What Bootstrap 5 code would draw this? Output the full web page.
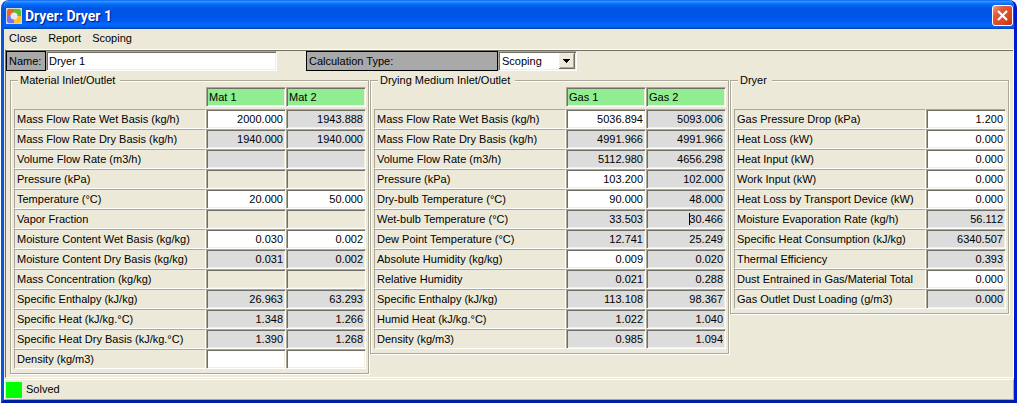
<!DOCTYPE html>
<html lang="en">
<head>
<meta charset="utf-8">
<meta name="viewport" content="width=device-width, initial-scale=1">
<title>Dryer: Dryer 1</title>
<link href="https://cdn.jsdelivr.net/npm/bootstrap@5.3.0/dist/css/bootstrap.min.css" rel="stylesheet">
<style>
  :root { --face:#ece9d8; --shade:#aca899; --dark:#716f64; --lite:#f1efe2; --calc:#dcdcdc; }
  body { font:11px/13px "Liberation Sans", Arial, sans-serif; color:#000; background:#fff; padding:0 0 1px 1px; }
  .win { min-height:calc(100vh - 1px); background:var(--face); border:solid #0831d9; border-width:0 3px 3px; border-color:#0831d9 #0019cf #001ea0 #0855dd; border-radius:8px 8px 0 0; overflow:hidden; }
  .titlebar { height:29px; margin:0 -3px; padding:2px 4px 0 5px; color:#fff;
    background:linear-gradient(#0058ee 0,#3593ff 4%,#288eff 7%,#127dff 10%,#036ffc 14%,#0262ee 20%,#0057e5 28%,#0054e3 45%,#0055eb 60%,#005bf5 74%,#026afe 84%,#0062ef 92%,#0040ab 100%); }
  .titlebar h1 { font:bold 14px/20px Roboto, sans-serif; text-shadow:1px 1px 1px #0f1089; margin:0 0 0 3px; }
  .closebtn { width:21px; height:21px; padding:0; border:1px solid #fff; border-radius:3px; line-height:0;
    background:linear-gradient(135deg,#f0a088 0,#e4593a 30%,#d9431d 75%,#b8300c 100%); }
  .menubar { height:20px; padding:3px 5px 0; gap:11px; }
  .menubar a { color:#000; text-decoration:none; }
  .client { margin-left:1px; border:1px solid #fff; border-left-color:var(--dark); border-right-color:#fff; }
  .client-in { border-top:1px solid var(--dark); padding-bottom:3px; }
  .tag { height:20px; border:1px solid #000; background:#a9a9a9; padding:3px 2px 0; }
  .sunk { display:block; height:20px; border:1px solid; border-color:var(--shade) #fff #fff var(--shade); border-radius:0;
    box-shadow:inset 1px 1px 0 var(--dark), inset -1px -1px 0 var(--lite); background:#fff; color:#000; font:inherit; outline:0; }
  .name-tag { width:40px; } .name-box { width:231px; padding:0 2px; }
  .calc-tag { width:192px; margin-left:29px; }
  .combo { width:79px; }
  .combo select { width:100%; height:100%; appearance:none; border:0; background:transparent; font:inherit; color:#000; padding:0 18px 0 3px; outline:0; }
  .combo svg { position:absolute; right:1px; top:1px; pointer-events:none; }
  .groups { display:grid; grid-template-columns:minmax(300px,360fr) minmax(300px,360fr) minmax(230px,280fr); padding:3px 3px 0 4px; align-items:start; }
  .group { margin-right:1px; min-width:0; border:1px solid var(--shade); box-shadow:1px 1px 0 #fff, inset 1px 1px 0 #fff; padding:0 2px 4px 3px; }
  .group legend { float:none; width:auto; height:13px; font:inherit; margin:0 0 0 4px; padding:0 5px 0 2px; background:var(--face); }
  .grid { width:100%; table-layout:fixed; border-collapse:separate; border-spacing:0; }
  .grid th, .grid td { padding:0; font-weight:normal; height:20px; vertical-align:top; }
  .grid thead th { height:22px; }
  .grid .val { width:80px; }
  .grid tbody th { border:1px solid; border-color:var(--shade) #fff #fff var(--shade); padding:3px 2px 0; white-space:nowrap; overflow:hidden; line-height:13px; }
  .grid .sunk { width:100%; padding:0 2px; text-align:right; }
  .grid .head { background:#90ee90; text-align:left; padding:3px 2px 0; }
  .sunk.calc { background:var(--calc); }
  .sunk.off { background:var(--face); }
  .ibeam { position:absolute; right:36px; top:4px; width:1px; height:12px; background:#000; }
  .statusbar { height:21px; margin-top:1px; border:1px solid #fff; border-color:#fff var(--shade) var(--shade) #fff; padding-left:1px; }
  .lamp { width:16px; height:16px; background:#0f0; }
</style>
</head>
<body>
<div class="win d-flex flex-column">
  <header class="titlebar d-flex align-items-center">
    <svg width="16" height="16" viewBox="0 0 16 16" aria-hidden="true">
      <rect width="16" height="16" fill="#d4d8cc"/>
      <path d="M1 9V2h1V1h7v8z" fill="#f0602c"/><path d="M8 8V1h6v1h1v7z" fill="#58c030"/>
      <path d="M8 8h7v6h-1v1H7z" fill="#ffc428"/><path d="M8 8v7H2v-1H1V7z" fill="#8070f0"/>
      <circle cx="8" cy="8" r="3.5" fill="#e8e8f4"/>
    </svg>
    <h1>Dryer: Dryer 1</h1>
    <button type="button" class="closebtn ms-auto" aria-label="Close window">
      <svg width="19" height="19" viewBox="0 0 19 19"><path d="M5 5l9 9M14 5l-9 9" stroke="#fff" stroke-width="2.2"/></svg>
    </button>
  </header>
  <nav class="menubar d-flex"><a href="#">Close</a><a href="#">Report</a><a href="#">Scoping</a></nav>

  <main class="client flex-grow-1 d-flex flex-column"><div class="client-in flex-grow-1">
    <div class="d-flex">
      <label class="tag name-tag" for="nm">Name:</label>
      <input id="nm" class="sunk name-box" value="Dryer 1">
      <label class="tag calc-tag" for="ct">Calculation Type:</label>
      <div class="sunk combo position-relative">
        <select id="ct"><option>Scoping</option><option>Balance</option></select>
        <svg width="16" height="16" viewBox="0 0 16 16" aria-hidden="true"><path d="M0 0h16v16H0z" fill="#716f64"/><path d="M0 0h15v15H0z" fill="#f1efe2"/><path d="M1 1h14v14H1z" fill="#aca899"/><path d="M1 1h13v13H1z" fill="#ece9d8"/><path d="M4 6h7v1h-1v1H9v1H8v1H7V9H6V8H5V7H4z"/></svg>
      </div>
    </div>
    <div class="groups" id="groups"></div>
  </div></main>

  <footer class="statusbar d-flex align-items-center"><span class="lamp"></span><span class="ms-1">Solved</span></footer>
</div>

<script src="https://cdn.jsdelivr.net/npm/bootstrap@5.3.0/dist/js/bootstrap.bundle.min.js"></script>
<script>
// Values: plain = editable, "=" prefix = calculated, "-" = unavailable.
const data = [
  { title:'Material Inlet/Outlet', heads:['Mat 1','Mat 2'], rows:[
    ['Mass Flow Rate Wet Basis (kg/h)','2000.000','=1943.888'],
    ['Mass Flow Rate Dry Basis (kg/h)','=1940.000','=1940.000'],
    ['Volume Flow Rate (m3/h)','=','='],
    ['Pressure (kPa)','-','-'],
    ['Temperature (°C)','20.000','50.000'],
    ['Vapor Fraction','-','-'],
    ['Moisture Content Wet Basis (kg/kg)','0.030','0.002'],
    ['Moisture Content Dry Basis (kg/kg)','=0.031','=0.002'],
    ['Mass Concentration (kg/kg)','-','-'],
    ['Specific Enthalpy (kJ/kg)','=26.963','=63.293'],
    ['Specific Heat (kJ/kg.°C)','=1.348','=1.266'],
    ['Specific Heat Dry Basis (kJ/kg.°C)','=1.390','=1.268'],
    ['Density (kg/m3)','','']] },
  { title:'Drying Medium Inlet/Outlet', heads:['Gas 1','Gas 2'], rows:[
    ['Mass Flow Rate Wet Basis (kg/h)','5036.894','=5093.006'],
    ['Mass Flow Rate Dry Basis (kg/h)','=4991.966','=4991.966'],
    ['Volume Flow Rate (m3/h)','=5112.980','=4656.298'],
    ['Pressure (kPa)','103.200','=102.000'],
    ['Dry-bulb Temperature (°C)','90.000','=48.000'],
    ['Wet-bulb Temperature (°C)','=33.503','=30.466'],
    ['Dew Point Temperature (°C)','=12.741','=25.249'],
    ['Absolute Humidity (kg/kg)','0.009','=0.020'],
    ['Relative Humidity','=0.021','=0.288'],
    ['Specific Enthalpy (kJ/kg)','=113.108','=98.367'],
    ['Humid Heat (kJ/kg.°C)','=1.022','=1.040'],
    ['Density (kg/m3)','=0.985','=1.094']] },
  { title:'Dryer', heads:[''], rows:[
    ['Gas Pressure Drop (kPa)','1.200'],
    ['Heat Loss (kW)','0.000'],
    ['Heat Input (kW)','0.000'],
    ['Work Input (kW)','0.000'],
    ['Heat Loss by Transport Device (kW)','0.000'],
    ['Moisture Evaporation Rate (kg/h)','=56.112'],
    ['Specific Heat Consumption (kJ/kg)','=6340.507'],
    ['Thermal Efficiency','=0.393'],
    ['Dust Entrained in Gas/Material Total','0.000'],
    ['Gas Outlet Dust Loading (g/m3)','=0.000']] }
];
const cell = (label, head, v) => {
  const kind = v[0] === '=' ? 'calc' : v[0] === '-' ? 'off' : '';
  const caret = v === '=30.466' ? '<span class="ibeam"></span>' : '';
  return `<td class="position-relative"><input class="sunk ${kind}" aria-label="${label} ${head}" value="${v.replace(/^[=-]/,'')}" ${kind ? 'readonly' : ''}>${caret}</td>`;
};
document.getElementById('groups').innerHTML = data.map(g => `
  <fieldset class="group"><legend>${g.title}</legend>
  <table class="grid"><thead><tr><th></th>${g.heads.map(h => `<th class="val" scope="col">${h ? `<div class="sunk head">${h}</div>` : ''}</th>`).join('')}</tr></thead>
  <tbody>${g.rows.map(([l,...vs]) => `<tr><th scope="row">${l}</th>${vs.map((v,i) => cell(l, g.heads[i], v)).join('')}</tr>`).join('')}</tbody></table>
  </fieldset>`).join('');
</script>
</body>
</html>
